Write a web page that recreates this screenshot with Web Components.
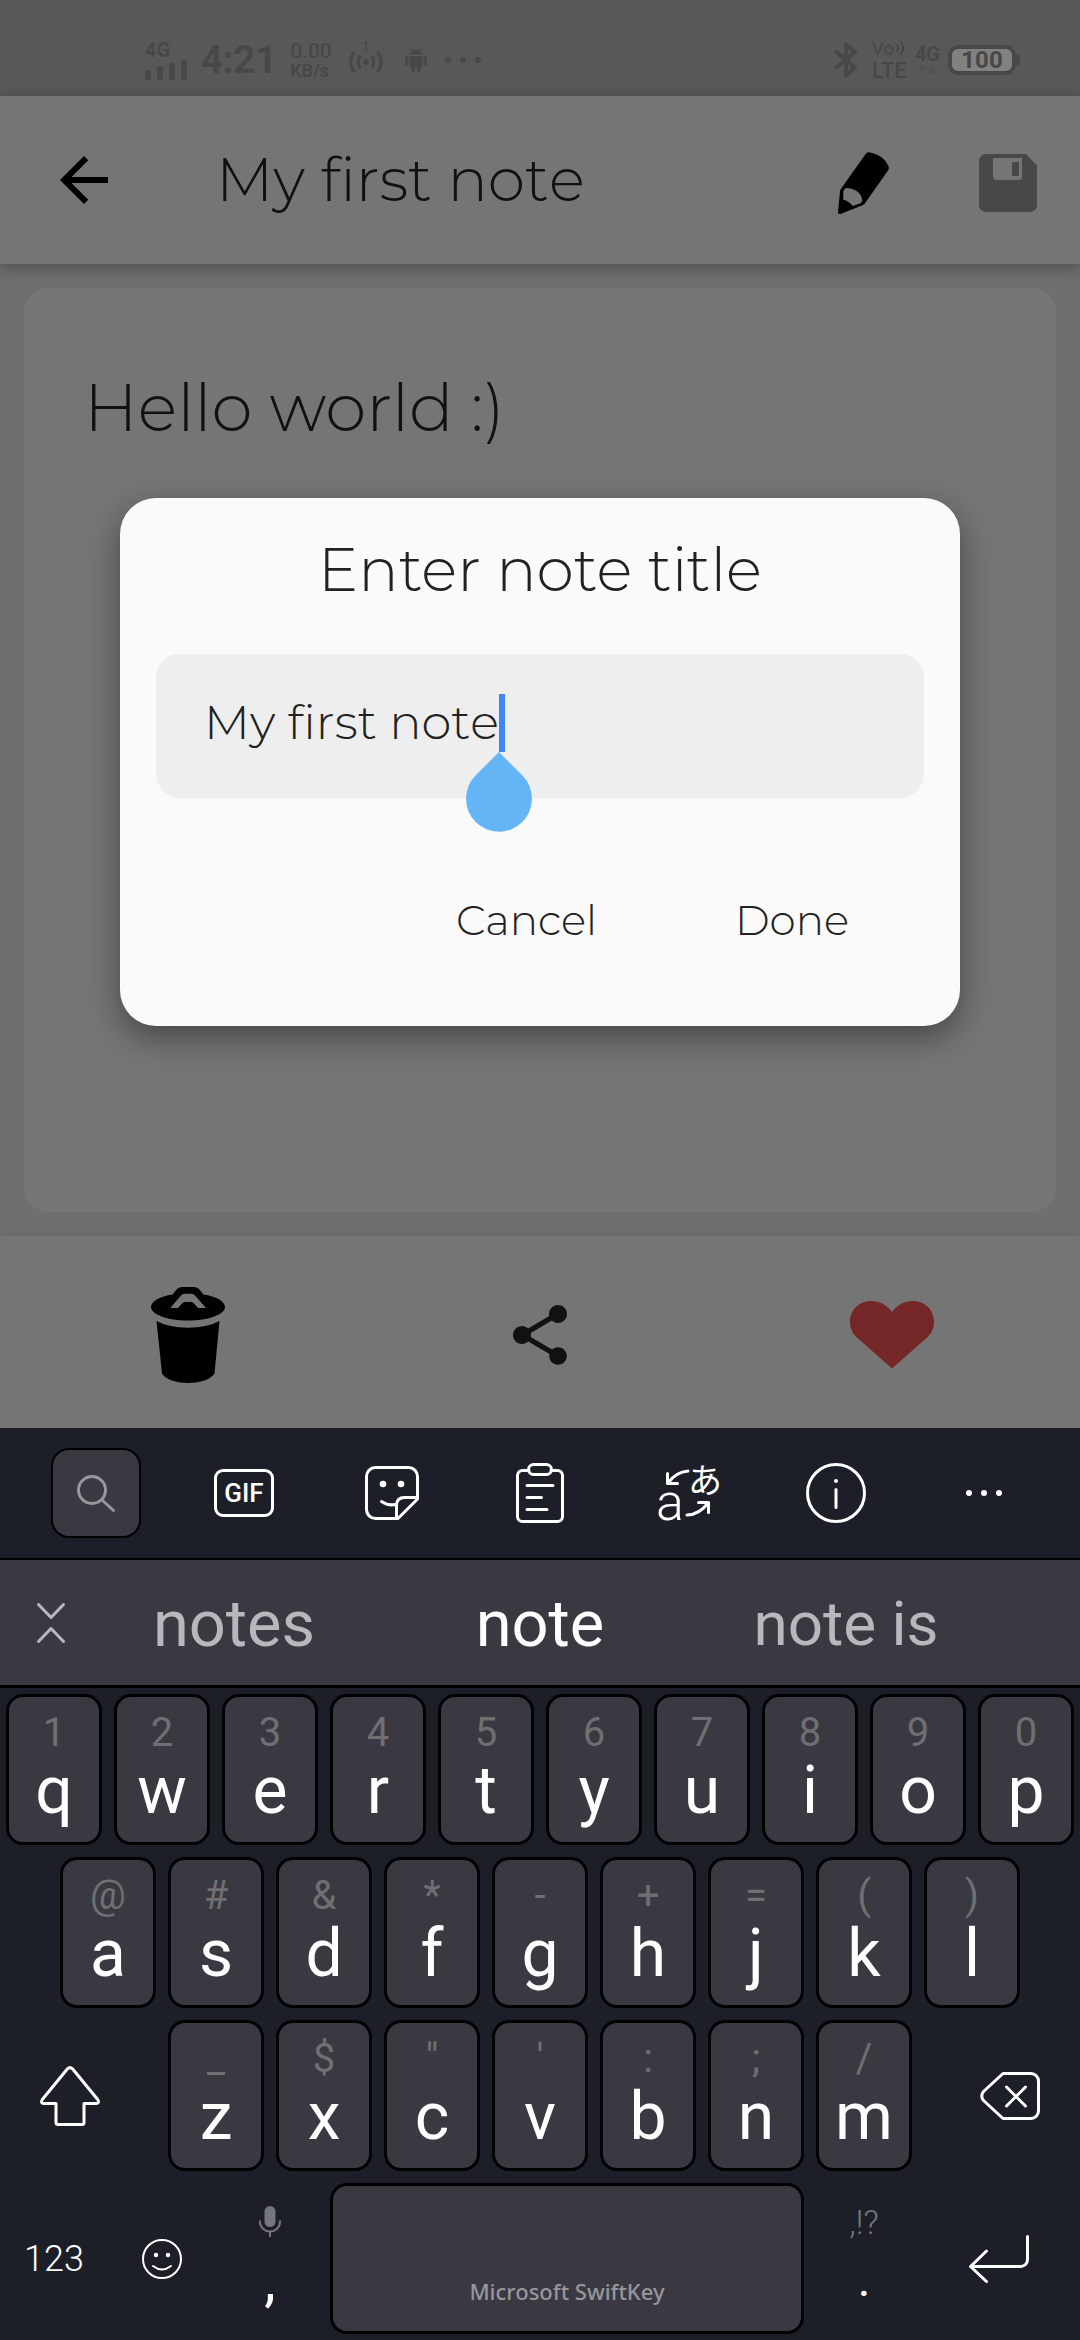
<!DOCTYPE html>
<html lang="en">
<head>
<meta charset="utf-8">
<meta name="viewport" content="width=device-width, initial-scale=1">
<title>My first note</title>
<style>
  html, body { margin: 0; }
  body {
    min-height: 100vh;
    display: flex;
    flex-direction: column;
    background: #1d1f28;
    font-family: Roboto, "Liberation Sans", sans-serif;
    --note-font: Montserrat, Inter, "Liberation Sans", sans-serif;
  }
  note-app { flex: 1; }
</style>
</head>
<body>
<note-app>
  <status-bar slot="status"></status-bar>
  <app-bar slot="bar">My first note</app-bar>
  <note-card slot="note">Hello world :)</note-card>
  <action-bar slot="actions"></action-bar>
  <title-dialog slot="dialog" value="My first note">Enter note title</title-dialog>
</note-app>
<soft-keyboard></soft-keyboard>

<script>
const RESET = `
  :host { box-sizing: border-box; }
  *, *::before, *::after { box-sizing: border-box; }
  button { margin: 0; padding: 0; border: 0; background: none; color: inherit; font: inherit; display: flex; align-items: center; justify-content: center; }
  svg { display: block; overflow: visible; }
  h1, h2, p { margin: 0; font-weight: inherit; }
`;

function define(name, css, html) {
  const template = document.createElement('template');
  customElements.define(name, class extends HTMLElement {
    constructor() {
      super();
      template.innerHTML ||= `<style>${RESET}${css}</style>` + (typeof html === 'string' ? html : '');
      this.attachShadow({ mode: 'open' }).append(template.content.cloneNode(true));
    }
    connectedCallback() {
      if (typeof html === 'function' && !this.ready) {
        this.ready = true;
        this.shadowRoot.innerHTML += html(this);
      }
    }
  });
}

const line = (w = 3) => `fill="none" stroke="currentColor" stroke-width="${w}" stroke-linecap="round" stroke-linejoin="round"`;

/* name: [width, height, markup] */
const ICONS = {
  back: [72, 72, `<path fill="currentColor" transform="scale(3)" d="M20 11H7.83l5.59-5.59L12 4l-8 8 8 8 1.41-1.41L7.83 13H20z"/>`],
  pencil: [51, 62, `<path fill="currentColor" fill-rule="evenodd" d="M28 1.5Q29 .2 31 .3Q45 2.500 50.500 14Q51.300 16 50.400 18L26.800 51.500Q26 52.700 24.500 53.300L2.500 61.900Q0 62.500 0 60.500L2 39.500Q2.200 38 3 36.800ZM8 36Q5.700 37 5.300 39.500L5.200 47.500Q11 49 14.800 54L22.500 51.200Q24.600 49.500 24.300 48Q22 36.500 8 36Z"/>`],
  save: [58, 58, `<path fill="#484848" d="M7 0H47L58 11.500V51a7 7 0 0 1-7 7H7a7 7 0 0 1-7-7V7a7 7 0 0 1 7-7Z"/><path fill="#757575" d="M14 4H43V22.500a3.500 3.500 0 0 1-3.500 3.500H17.500a3.500 3.500 0 0 1-3.500-3.500Z"/><path fill="#484848" d="M33 8h7v14h-7z"/>`],
  trash: [74, 96, `<path fill="currentColor" fill-rule="evenodd" d="M21.500 7.500L25.500 2.500Q27.500 0 30.500 0H43.500Q46.500 0 48.500 2.500L52.500 7.500C65 9.500 74 14.200 74 20C74 27.500 57.500 33.500 37 33.500S0 27.500 0 20C0 14.200 9 9.500 21.500 7.500ZM33.500 6.700Q31.500 6.700 30 8.500L19.300 21H27L31 16.500Q32 15 34 15H40Q42 15 43 16.500L47 21H55L44 8.500Q42.500 6.700 40.500 6.700Z"/><path fill="currentColor" d="M5.500 34Q18 40.700 37 40.700T68.500 34L63.500 86.500C61 91.500 50 96 37 96S13.500 91.500 11 86.500Z"/>`],
  share: [72, 72, `<path fill="currentColor" transform="scale(3)" d="M18 16.080c-.76 0-1.440.3-1.960.77L8.910 12.700c.05-.23.09-.46.09-.7s-.04-.47-.09-.7l7.050-4.110c.54.5 1.250.81 2.040.81 1.660 0 3-1.340 3-3s-1.340-3-3-3-3 1.340-3 3c0 .24.04.47.09.7L8.040 9.810C7.500 9.310 6.790 9 6 9c-1.660 0-3 1.340-3 3s1.340 3 3 3c.79 0 1.500-.31 2.040-.81l7.120 4.160c-.05.21-.08.43-.08.65 0 1.610 1.310 2.920 2.920 2.920s2.920-1.310 2.920-2.920-1.310-2.920-2.920-2.920z"/>`],
  heart: [84, 68, `<path fill="currentColor" d="M42 67.500L7.500 37C2.500 32.500 0 27.500 0 21C0 9 9 0 21 0C30 0 37.500 4.500 42 11C46.500 4.500 54 0 63 0C75 0 84 9 84 21C84 27.500 81.500 32.500 76.500 37Z"/>`],
  search: [40, 38, `<g ${line()}><circle cx="16" cy="16" r="13.500"/><path d="M26 26L37.500 36.500"/></g>`],
  sticker: [54, 54, `<g ${line()}><path d="M52.500 31.500V10.500a9 9 0 0 0-9-9H10.500a9 9 0 0 0-9 9v33a9 9 0 0 0 9 9H33L52.500 33ZM52 31.500H39.500q-8 0-8 8V52M16.500 35.500q6.500 4.500 14 3"/></g><circle cx="18" cy="18" r="3.300" fill="currentColor"/><circle cx="36" cy="18" r="3.300" fill="currentColor"/>`],
  clipboard: [48, 60, `<g ${line()}><path d="M13 7.500H6.500a5 5 0 0 0-5 5v41a5 5 0 0 0 5 5h35a5 5 0 0 0 5-5v-41a5 5 0 0 0-5-5H35"/><rect x="12.500" y="1.500" width="23" height="10" rx="5"/><path d="M11 22.500H37M11 34.500H25.500M11 46.500H31"/></g>`],
  translate: [64, 64, `<text x="0" y="59" font-family="Roboto" font-weight="300" font-size="52" fill="currentColor">a</text><text x="32" y="32" font-family="Noto Sans CJK JP" font-size="34" fill="currentColor">あ</text><g ${line()}><path d="M32 10Q20 11 12 22M11.500 12.500V22.500H21.500M31 54Q43 54 52.500 41.500M42.500 41.500H52.500V51.500"/></g>`],
  info: [60, 60, `<circle cx="30" cy="30" r="28.500" ${line()}/><path d="M30 26.500V44.500" ${line()}/><circle cx="30" cy="18" r="2" fill="currentColor"/>`],
  more: [36, 6, `<g fill="currentColor"><circle cx="3" cy="3" r="3"/><circle cx="18" cy="3" r="3"/><circle cx="33" cy="3" r="3"/></g>`],
  chevrons: [28, 40, `<path d="M1.500 1.500L14 14.500L26.500 1.500M1.500 38.500L14 25.500L26.500 38.500" ${line()}/>`],
  shift: [60, 60, `<path d="M27.500 2.800L2.300 33.500Q0 37.500 4 37.500H16V56.500Q16 58.500 18 58.500H42Q44 58.500 44 56.500V37.500H56Q60 37.500 57.700 33.500L32.500 2.800Q30 .4 27.500 2.800Z" ${line()}/>`],
  backspace: [60, 48, `<path d="M23 1.500H51a7.500 7.500 0 0 1 7.500 7.500V39a7.500 7.500 0 0 1-7.500 7.500H23L3.500 28.500Q0 24 3.500 19.500ZM26.500 15L45.500 34M45.500 15L26.500 34" ${line()}/>`],
  enter: [60, 48, `<path d="M58.500 1.500V24.500a7 7 0 0 1-7 7H1.500M17.500 16L1.500 31.500L17.500 46.500" ${line()}/>`],
  emoji: [40, 40, `<circle cx="20" cy="20" r="19" ${line(2)}/><path d="M11 27q9 7 18 0" ${line(2)}/><circle cx="14" cy="16" r="2.200" fill="currentColor"/><circle cx="26" cy="16" r="2.200" fill="currentColor"/>`],
  mic: [22, 32, `<rect x="5.500" y="0" width="11" height="21" rx="5.500" fill="currentColor"/><path d="M1 14.500V16a10 9.500 0 0 0 20 0V14.500M11 25.500V31" fill="none" stroke="currentColor" stroke-width="2"/>`],
  signal: [42, 20, `<g fill="currentColor"><rect y="10" width="6" height="10" rx="2"/><rect x="12" y="6" width="6" height="14" rx="2"/><rect x="24" y="3" width="6" height="17" rx="2"/><rect x="36" width="6" height="20" rx="2"/></g>`],
  hotspot: [34, 24, `<g fill="none" stroke="currentColor" stroke-width="3"><path d="M5.500 1.500Q-2 12 5.500 22.500M28.500 1.500Q36 12 28.500 22.500M11.500 6Q7 12 11.500 18M22.500 6Q27 12 22.500 18"/></g><circle cx="17" cy="12" r="3" fill="currentColor"/>`],
  android: [22, 26, `<g fill="currentColor"><path d="M5 8A6 5.500 0 0 1 17 8Z"/><path d="M4.500 9H17.500V19a2 2 0 0 1-2 2H6.500a2 2 0 0 1-2-2Z"/><rect y="9" width="3.500" height="10" rx="1.700"/><rect x="18.500" y="9" width="3.500" height="10" rx="1.700"/><rect x="6.500" y="18" width="3.300" height="8" rx="1.500"/><rect x="12.200" y="18" width="3.300" height="8" rx="1.500"/></g><path d="M5 .5L7.500 4M17 .5L14.500 4" stroke="currentColor" stroke-width="1.200"/>`],
  bluetooth: [24, 36, `<path d="M2.500 10L21 25.500L12 33.500V2.500L21 10L2.500 25.500" fill="none" stroke="currentColor" stroke-width="4" stroke-linecap="round" stroke-linejoin="round"/>`],
  waves: [10, 18, `<path d="M1.500 5Q4.500 9 1.500 13M5.500 2Q11 9 5.500 16" fill="none" stroke="currentColor" stroke-width="2"/>`],
  traffic: [18, 9, `<path fill="currentColor" d="M0 0H8L4 9ZM9.500 9H17.500L13.500 0Z"/>`],
  drop: [66, 80, `<path fill="currentColor" d="M33 0L56.500 23.500A33 33 0 1 1 9.500 23.500Z"/>`],
};

define('ui-icon', `:host { display: block; flex: none; }`, el => {
  const [w, h, body] = ICONS[el.getAttribute('name')];
  return `<svg width="${w}" height="${h}" viewBox="0 0 ${w} ${h}" aria-hidden="true">${body}</svg>`;
});

define('status-bar', `
  :host { display: flex; justify-content: space-between; align-items: center; height: 96px; padding: 24px 60px 0 145px; background: #585858; color: #484848; font-weight: 700; }
  .group { display: flex; align-items: center; }
  .stack { display: flex; flex-direction: column; }
  .left { gap: 16px; }
  .net { gap: 1px; font-size: 20px; line-height: 18px; margin-right: -2px; }
  .clock { font-size: 38px; line-height: 44px; }
  .rate { font-size: 21px; line-height: 22px; font-weight: 500; margin-left: -3px; }
  .rate small { font-size: 18px; line-height: 18px; font-weight: 700; }
  .spot { align-items: center; font-size: 16px; line-height: 12px; font-weight: 400; padding-bottom: 4px; margin-left: 1px; }
  .spot ui-icon { margin-top: -4px; }
  .app { margin: 0 2px 0 6px; }
  .right { gap: 8px; }
  .lte { font-size: 22px; line-height: 20px; font-weight: 500; margin-left: 6px; gap: 2px; }
  .vo { display: flex; gap: 1px; font-size: 19px; line-height: 20px; font-weight: 400; }
  .sim { font-size: 20px; line-height: 16px; align-items: center; gap: 3px; }
  .sim ui-icon { color: #525252; }
  .battery { display: flex; align-items: center; }
  .cell { width: 68px; height: 30px; border: 4px solid #484848; border-radius: 10px; background: #818181; font-size: 24px; line-height: 22px; text-align: center; }
  .battery::after { content: ""; width: 4px; height: 12px; border-radius: 0 4px 4px 0; background: #484848; }
`, `
  <div class="group left">
    <div class="stack net"><span>4G</span><ui-icon name="signal"></ui-icon></div>
    <span class="clock">4:21</span>
    <div class="stack rate"><span>0.00</span><small>KB/s</small></div>
    <div class="stack spot"><span>1</span><ui-icon name="hotspot"></ui-icon></div>
    <ui-icon class="app" name="android"></ui-icon>
    <ui-icon name="more"></ui-icon>
  </div>
  <div class="group right">
    <ui-icon name="bluetooth"></ui-icon>
    <div class="stack lte"><span class="vo">Vo<ui-icon name="waves"></ui-icon></span><span>LTE</span></div>
    <div class="stack sim"><span>4G</span><ui-icon name="traffic"></ui-icon></div>
    <div class="battery"><div class="cell">100</div></div>
  </div>
`);

define('app-bar', `
  :host { display: flex; align-items: center; height: 168px; padding: 0 43px 0 48px; background: #757575; box-shadow: 0 4px 16px rgba(0,0,0,.3); color: #000; z-index: 1; }
  h1 { flex: 1; margin-left: 96px; font: 300 60px/72px var(--note-font); font-variant-ligatures: none; font-kerning: none; color: #111; }
  .tools { display: flex; align-items: center; gap: 90px; padding-top: 6px; }
`, `
  <button aria-label="Back"><ui-icon name="back"></ui-icon></button>
  <h1><slot></slot></h1>
  <div class="tools">
    <button aria-label="Edit"><ui-icon name="pencil"></ui-icon></button>
    <button aria-label="Save"><ui-icon name="save"></ui-icon></button>
  </div>
`);

define('note-card', `
  :host { display: block; flex: 1; margin: 24px; padding: 80px 60px; border-radius: 24px; background: #757575; }
  p { font: 300 66px/80px var(--note-font); font-variant-ligatures: none; color: #111; }
`, `<p><slot></slot></p>`);

define('action-bar', `
  :host { display: grid; grid-template-columns: repeat(3, 1fr); height: 192px; padding: 6px 12px 0; background: #757575; box-shadow: 0 0 6px rgba(0,0,0,.12); color: #000; }
  .share { color: #111; }
  .like { color: #752626; }
`, `
  <button aria-label="Delete"><ui-icon name="trash"></ui-icon></button>
  <button class="share" aria-label="Share"><ui-icon name="share"></ui-icon></button>
  <button class="like" aria-label="Favourite"><ui-icon name="heart"></ui-icon></button>
`);

define('title-dialog', `
  :host { display: block; width: 100%; margin: 0 120px; padding: 36px; border-radius: 36px; background: #fafafa; color: #212121; box-shadow: 0 12px 32px rgba(0,0,0,.4); font-family: var(--note-font); font-weight: 300; font-variant-ligatures: none; }
  label { display: block; text-align: center; font-size: 60px; line-height: 72px; }
  .field { display: flex; align-items: center; height: 144px; margin-top: 48px; padding: 0 48px 8px; border-radius: 24px; background: #eee; }
  input { field-sizing: content; min-width: 0; padding: 0; border: 0; outline: 0; background: none; color: inherit; font: inherit; font-variant-ligatures: inherit; font-kerning: none; font-size: 48px; line-height: 60px; }
  .caret { position: relative; flex: none; width: 6px; height: 58px; margin-top: 2px; background: #4285f4; }
  .caret ui-icon { position: absolute; top: 58px; left: -33px; color: #64b5f6; }
  .buttons { display: flex; justify-content: flex-end; gap: 48px; margin: 56px 0 4px; padding-right: 30px; }
  .buttons button { height: 132px; padding: 0 45px; font-size: 42px; line-height: 48px; }
`, el => `
  <label for="title"><slot></slot></label>
  <div class="field">
    <input id="title" type="text" value="${el.getAttribute('value')}">
    <span class="caret"><ui-icon name="drop"></ui-icon></span>
  </div>
  <div class="buttons"><button>Cancel</button><button>Done</button></div>
`);

define('note-app', `
  :host { position: relative; display: flex; flex-direction: column; background: #6f6f6f; overflow: hidden; }
  .overlay { position: absolute; inset: 96px 0 0; z-index: 2; display: flex; align-items: center; }
`, `
  <slot name="status"></slot><slot name="bar"></slot><slot name="note"></slot><slot name="actions"></slot>
  <div class="overlay"><slot name="dialog"></slot></div>
`);

define('key-cap', `
  :host { display: block; flex: 1; padding: 0 6px; }
  button { width: 100%; height: 151px; padding-top: 16px; flex-direction: column; justify-content: flex-start; gap: 5px; border: 3px solid #000; border-radius: 17px; background: #3a3942; color: #fff; font-size: 66px; line-height: 66px; }
  .hint { height: 40px; font-size: 40px; line-height: 40px; color: #6f6f72; }
  :host([plain]) button { border-color: transparent; background: none; }
`, el => `<button>${el.hasAttribute('hint') ? `<span class="hint">${el.getAttribute('hint')}</span>` : '<slot name="hint"></slot>'}<span><slot></slot></span></button>`);

define('tool-bar', `
  :host { display: grid; grid-template-columns: repeat(7, 1fr); height: 130px; padding: 0 22px; color: #fff; }
  .box { width: 90px; height: 90px; border: 2px solid #000; border-radius: 18px; background: #3a3942; color: #98979c; display: grid; place-items: center; }
  .gif { width: 60px; height: 48px; border: 3px solid #fff; border-radius: 9px; font-size: 26px; line-height: 42px; font-weight: 500; text-align: center; }
`, `
  <button aria-label="Search"><span class="box"><ui-icon name="search"></ui-icon></span></button>
  <button><span class="gif">GIF</span></button>
  <button aria-label="Stickers"><ui-icon name="sticker"></ui-icon></button>
  <button aria-label="Clipboard"><ui-icon name="clipboard"></ui-icon></button>
  <button aria-label="Translate"><ui-icon name="translate"></ui-icon></button>
  <button aria-label="Info"><ui-icon name="info"></ui-icon></button>
  <button aria-label="More"><ui-icon name="more"></ui-icon></button>
`);

define('suggestion-bar', `
  :host { display: grid; grid-template-columns: 81px 1fr 1fr 1fr 81px; height: 130px; border-top: 2px solid #000; border-bottom: 3px solid #000; background: #3a3942; color: #b8b7bc; }
  button { font-size: 65px; line-height: 80px; padding-top: 2px; }
  .toggle { padding: 0 0 0 21px; }
  .best { color: #fff; }
  .long { font-size: 62px; }
`, `
  <button class="toggle" aria-label="Collapse"><ui-icon name="chevrons"></ui-icon></button>
  <button>notes</button><button class="best">note</button><button class="long">note is</button>
`);

const keys = (letters, hints) => [...letters].map((c, i) => `<key-cap hint='${hints[i] === "'" ? '&#39;' : hints[i]}'>${c}</key-cap>`).join('');

define('soft-keyboard', `
  :host { display: block; background: #1d1f28; color: #fff; }
  .rows { display: flex; flex-direction: column; gap: 12px; padding: 6px 0; }
  .row { display: flex; }
  .row.home { padding: 0 5%; }
  .shift { padding-right: 22px; }
  .erase { padding-left: 22px; }
  .third button { flex: none; width: 15%; }
  .last { display: grid; grid-template-columns: 2fr 2fr 2fr 9fr 2fr 3fr; }
  .num { font-size: 36px; line-height: 40px; font-weight: 300; }
  .slot { height: 40px; display: flex; align-items: center; justify-content: center; color: #76767a; font-size: 34px; line-height: 40px; font-weight: 300; }
  .brand { display: block; margin-top: 30px; color: #97969b; font: 500 22px/28px "Noto Sans", "Open Sans", sans-serif; }
  .comma { display: block; font-size: 58px; }
  .dot { display: block; font-size: 48px; }
`, `
  <tool-bar></tool-bar>
  <suggestion-bar></suggestion-bar>
  <div class="rows">
    <div class="row">${keys('qwertyuiop', '1234567890')}</div>
    <div class="row home">${keys('asdfghjkl', '@#&*-+=()')}</div>
    <div class="row third">
      <button class="shift" aria-label="Shift"><ui-icon name="shift"></ui-icon></button>
      ${keys('zxcvbnm', `_$"':;/`)}
      <button class="erase" aria-label="Backspace"><ui-icon name="backspace"></ui-icon></button>
    </div>
    <div class="row last">
      <button class="num">123</button>
      <button aria-label="Emoji"><ui-icon name="emoji"></ui-icon></button>
      <key-cap plain><span slot="hint" class="slot"><ui-icon name="mic"></ui-icon></span><span class="comma">,</span></key-cap>
      <key-cap><span slot="hint" class="slot"></span><span class="brand">Microsoft SwiftKey</span></key-cap>
      <key-cap plain><span slot="hint" class="slot">,!?</span><span class="dot">.</span></key-cap>
      <button aria-label="Enter"><ui-icon name="enter"></ui-icon></button>
    </div>
  </div>
`);
</script>
</body>
</html>
